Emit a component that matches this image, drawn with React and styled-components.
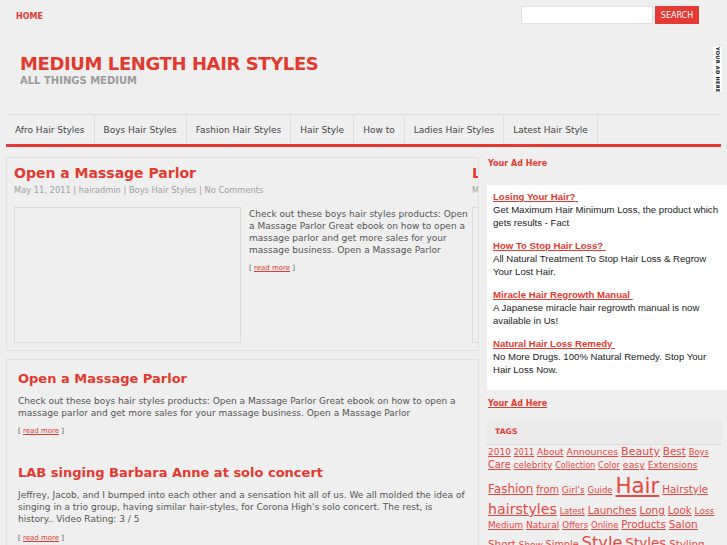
import React from "react";
import styled, { createGlobalStyle } from "styled-components";

const RED = "#e33a2f";
const BAR_RED = "#e53935";

const GlobalStyle = createGlobalStyle`
  html, body { margin: 0; padding: 0; background: #efefef; overflow: hidden; }
  body { font-family: "DejaVu Sans", Verdana, sans-serif; color: #555; }
  * { box-sizing: border-box; }
`;

const Page = styled.div`
  margin-left: 6px;
  width: 715px;
`;

const TopBar = styled.div`
  display: flex;
  align-items: center;
  justify-content: space-between;
  height: 30px;
  padding: 0 22px 0 10px;
`;

const HomeLink = styled.a`
  font-size: 8px;
  font-weight: bold;
  color: ${RED};
  text-decoration: none;
  margin-top: 3px;
`;

const SearchForm = styled.form`
  display: flex;
  gap: 2px;
  margin: 0;
`;

const SearchInput = styled.input`
  width: 132px;
  height: 18px;
  border: 1px solid #e2e2e2;
  background: #fff;
  padding: 0;
  margin: 0;
`;

const SearchButton = styled.button`
  width: 44px;
  height: 18px;
  border: none;
  background: ${BAR_RED};
  color: #fff;
  font-family: "DejaVu Sans", Verdana, sans-serif;
  font-size: 8px;
  padding: 0;
  margin: 0;
`;

const Header = styled.div`
  display: flex;
  justify-content: space-between;
  align-items: flex-start;
  height: 84px;
`;

const Branding = styled.div`
  padding: 23px 0 0 14px;
`;

const SiteTitle = styled.h1`
  margin: 0;
  font-size: 18px;
  font-weight: bold;
  letter-spacing: -0.4px;
  color: ${RED};
  line-height: normal;
`;

const Tagline = styled.p`
  margin: 1px 0 0;
  font-size: 10px;
  font-weight: bold;
  color: #9b9b9b;
  line-height: normal;
`;

const HeaderAd = styled.div`
  margin-top: 17px;
  margin-right: -1px;
  width: 9px;
  height: 45px;
  background: #fff;
  writing-mode: vertical-rl;
  font-size: 5px;
  font-weight: bold;
  color: #111;
  display: flex;
  align-items: center;
  justify-content: center;
  letter-spacing: 0.3px;
  white-space: nowrap;
`;

const Nav = styled.nav`
  display: flex;
  border-top: 1px solid #dedede;
  border-bottom: 3px solid ${BAR_RED};
`;

const NavItem = styled.a`
  height: 29px;
  line-height: 30px;
  padding: 0 9px;
  border-right: 1px solid #dedede;
  font-size: 9px;
  color: #444;
  text-decoration: none;
  white-space: nowrap;
`;

const Columns = styled.div`
  display: flex;
  gap: 8px;
  margin-top: 10px;
  align-items: flex-start;
`;

const Main = styled.main`
  flex: 0 0 473px;
  width: 473px;
`;

const FeatureBox = styled.section`
  border: 1px solid #e1e1e1;
  overflow: hidden;
  padding: 7px 0 7px 7px;
`;

const Track = styled.div`
  display: flex;
`;

const Slide = styled.article`
  flex: 0 0 458px;
  width: 458px;
`;

const PostTitle = styled.h2`
  margin: 0;
  font-size: ${(p) => p.$size}px;
  font-weight: bold;
  color: ${RED};
  line-height: normal;
  white-space: nowrap;
`;

const Meta = styled.div`
  margin-top: 4px;
  font-size: 8.3px;
  color: #a0a0a0;
  white-space: nowrap;
  line-height: normal;
`;

const SlideBody = styled.div`
  display: flex;
  gap: 8px;
  margin-top: 12px;
`;

const Thumb = styled.div`
  flex: 0 0 227px;
  height: 136px;
  border: 1px solid #dcdcdc;
`;

const SlideText = styled.div`
  flex: 1;
  min-width: 0;
`;

const Excerpt = styled.p`
  margin: ${(p) => p.$gap || 0}px 0 0;
  font-size: 9px;
  line-height: ${(p) => p.$lh || 11.7}px;
  color: #555;
`;

const ReadMore = styled.p`
  margin: ${(p) => p.$gap}px 0 0;
  font-size: 7px;
  color: #555;
  line-height: normal;
  a { color: ${RED}; text-decoration: underline; }
`;

const PostList = styled.section`
  margin-top: 8px;
  border: 1px solid #e1e1e1;
  padding: 11px 11px 20px;
`;

const Post = styled.article`
  & + & { margin-top: 30px; }
`;

const Sidebar = styled.aside`
  flex: 0 0 234px;
  width: 234px;
  padding-top: 2px;
`;

const WidgetTitle = styled.h3`
  margin: ${(p) => p.$top || 0}px 0 0 1px;
  font-size: 8px;
  font-weight: bold;
  color: ${RED};
  line-height: normal;
  text-decoration: ${(p) => (p.$underline ? "underline" : "none")};
`;

const AdBox = styled.div`
  width: 240px;
  margin-top: 17px;
  background: #fff;
  padding: 5px 6px 4px;
  font-family: "Liberation Sans", Arial, sans-serif;
`;

const AdItem = styled.div`
  margin-bottom: 10px;
  font-size: 9.6px;
  line-height: 13px;
`;

const AdLink = styled.a`
  font-weight: bold;
  color: ${RED};
  text-decoration: underline;
`;

const AdDesc = styled.p`
  margin: 0;
  color: #222;
`;

const TagsHeader = styled.div`
  margin-top: 11px;
  height: 26px;
  line-height: 25px;
  border-bottom: 1px solid #dddddd;
  padding-left: 8px;
  font-size: 7.7px;
  font-weight: bold;
  color: ${RED};
  background: #eaeaea;
`;

const TagCloud = styled.div`
  padding-left: 1px;
  font-size: 9px;
  line-height: 1.3;
`;

const Tag = styled.a`
  font-size: ${(p) => p.$size}px;
  color: #e8483e;
  text-decoration: underline;
`;

const navItems = [
  "Afro Hair Styles",
  "Boys Hair Styles",
  "Fashion Hair Styles",
  "Hair Style",
  "How to",
  "Ladies Hair Styles",
  "Latest Hair Style",
];

const slides = [
  {
    title: "Open a Massage Parlor",
    meta: "May 11, 2011 | hairadmin | Boys Hair Styles | No Comments",
    text: "Check out these boys hair styles products: Open a Massage Parlor Great ebook on how to open a massage parlor and get more sales for your massage business. Open a Massage Parlor",
  },
  {
    title: "LAB singing Barbara Anne at solo concert",
    meta: "May 11, 2011 | hairadmin | Hair Style | No Comments",
    text: "Jeffrey, Jacob, and I bumped into each other and a sensation hit all of us.",
  },
];

const posts = [
  {
    title: "Open a Massage Parlor",
    text: "Check out these boys hair styles products: Open a Massage Parlor Great ebook on how to open a massage parlor and get more sales for your massage business. Open a Massage Parlor",
  },
  {
    title: "LAB singing Barbara Anne at solo concert",
    text: "Jeffrey, Jacob, and I bumped into each other and a sensation hit all of us. We all molded the idea of singing in a trio group, having similar hair-styles, for Corona High's solo concert. The rest, is history.. Video Rating: 3 / 5",
  },
];

const ads = [
  ["Losing Your Hair?", "Get Maximum Hair Minimum Loss, the product which gets results - Fact"],
  ["How To Stop Hair Loss?", "All Natural Treatment To Stop Hair Loss & Regrow Your Lost Hair."],
  ["Miracle Hair Regrowth Manual", "A Japanese miracle hair regrowth manual is now available in Us!"],
  ["Natural Hair Loss Remedy", "No More Drugs. 100% Natural Remedy. Stop Your Hair Loss Now."],
];

const tags = [
  ["2010", 9], ["2011", 8], ["About", 9], ["Announces", 9.4], ["Beauty", 11], ["Best", 10.4], ["Boys", 8.3],
  ["Care", 9.8], ["celebrity", 8.9], ["Collection", 8.1], ["Color", 8.4], ["easy", 9.4], ["Extensions", 9.2],
  ["Fashion", 12], ["from", 9.8], ["Girl's", 9], ["Guide", 8.5], ["Hair", 21.4], ["Hairstyle", 10.3],
  ["hairstyles", 14.2], ["Latest", 8.1], ["Launches", 10.3], ["Long", 10.5], ["Look", 10.2], ["Loss", 9],
  ["Medium", 8.8], ["Natural", 9], ["Offers", 8.6], ["Online", 8.5], ["Products", 10.3], ["Salon", 10.5],
  ["Short", 10.4], ["Show", 8.9], ["Simple", 9.7], ["Style", 16.3], ["Styles", 13.5], ["Styling", 10.3],
  ["Tips", 9], ["Trends", 10], ["Women", 11],
];

export default function App() {
  return (
    <>
      <GlobalStyle />
      <Page>
        <TopBar>
          <HomeLink href="#">HOME</HomeLink>
          <SearchForm onSubmit={(e) => e.preventDefault()}>
            <SearchInput type="text" />
            <SearchButton type="submit">SEARCH</SearchButton>
          </SearchForm>
        </TopBar>
        <Header>
          <Branding>
            <SiteTitle>MEDIUM LENGTH HAIR STYLES</SiteTitle>
            <Tagline>ALL THINGS MEDIUM</Tagline>
          </Branding>
          <HeaderAd>YOUR AD HERE</HeaderAd>
        </Header>
        <Nav>
          {navItems.map((n) => (
            <NavItem key={n} href="#">{n}</NavItem>
          ))}
        </Nav>
        <Columns>
          <Main>
            <FeatureBox>
              <Track>
                {slides.map((s) => (
                  <Slide key={s.title}>
                    <PostTitle $size={14}>{s.title}</PostTitle>
                    <Meta>{s.meta}</Meta>
                    <SlideBody>
                      <Thumb />
                      <SlideText>
                        <Excerpt $gap={1} $lh={12}>{s.text}</Excerpt>
                        <ReadMore $gap={8}>
                          [ <a href="#">read more</a> ]
                        </ReadMore>
                      </SlideText>
                    </SlideBody>
                  </Slide>
                ))}
              </Track>
            </FeatureBox>
            <PostList>
              {posts.map((p) => (
                <Post key={p.title}>
                  <PostTitle $size={13}>{p.title}</PostTitle>
                  <Excerpt $gap={10}>{p.text}</Excerpt>
                  <ReadMore $gap={8}>
                    [ <a href="#">read more</a> ]
                  </ReadMore>
                </Post>
              ))}
            </PostList>
          </Main>
          <Sidebar>
            <WidgetTitle>Your Ad Here</WidgetTitle>
            <AdBox>
              {ads.map(([title, desc]) => (
                <AdItem key={title}>
                  <div>
                    <AdLink href="#">{title}{"\u00a0"}</AdLink>
                  </div>
                  <AdDesc>{desc}</AdDesc>
                </AdItem>
              ))}
            </AdBox>
            <WidgetTitle $top={9} $underline>Your Ad Here</WidgetTitle>
            <TagsHeader>TAGS</TagsHeader>
            <TagCloud>
              {tags.map(([t, s], i) => (
                <React.Fragment key={t}>
                  <Tag href="#" $size={s}>{t}</Tag>
                  {i < tags.length - 1 ? " " : null}
                </React.Fragment>
              ))}
            </TagCloud>
          </Sidebar>
        </Columns>
      </Page>
    </>
  );
}
